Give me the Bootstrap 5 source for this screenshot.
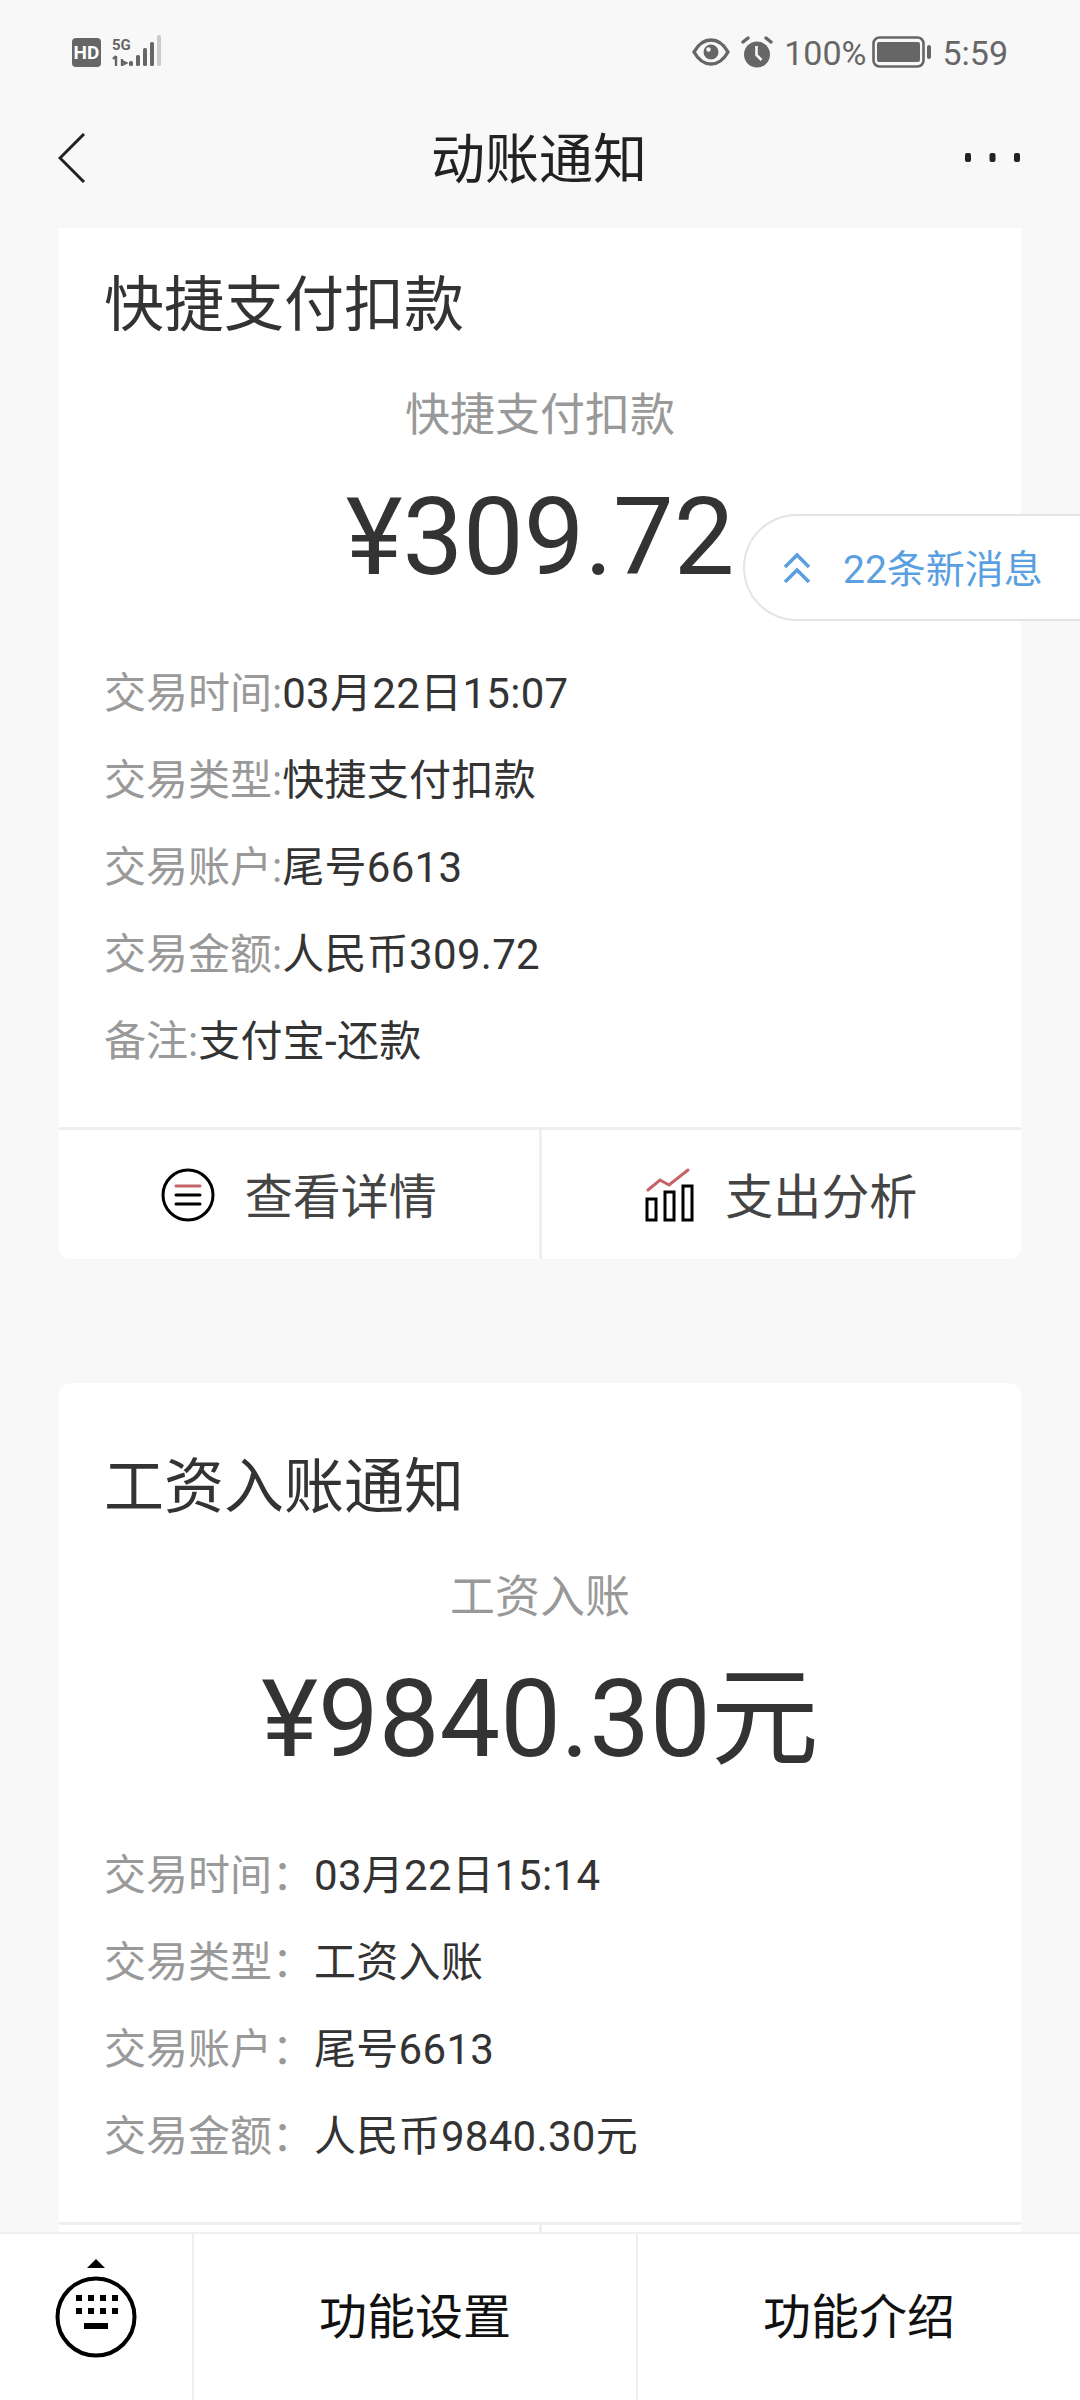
<!DOCTYPE html>
<html lang="zh-CN">
<head>
    <meta charset="UTF-8">
    <meta name="viewport" content="width=device-width, initial-scale=1.0">
    <title>动账通知</title>
    <link href="https://cdn.jsdelivr.net/npm/bootstrap@5.3.0/dist/css/bootstrap.min.css" rel="stylesheet">
    <style>
        html, body { height: 2400px; overflow: hidden; }
        body {
            background: #f8f8f8;
            color: #333;
            font-family: Roboto, "Noto Sans CJK SC", sans-serif;
        }
        .stat-bar { height: 104px; padding: 0 72px 0 70px; color: #666; font-size: 34px; }
        .stat-right { gap: 11px; }
        .stat-right span { padding-top: 2px; }
        .stat-pct { margin-right: -5px; }
        .nav-head { height: 108px; padding: 0 60px 0 58px; margin-bottom: 16px; }
        .nav-side { width: 60px; }
        .nav-title { font-size: 54px; color: #222; line-height: 1; padding-top: 5px; }
        .msg-scroll { flex: 1 1 auto; overflow: hidden; padding: 0 59px; min-height: 0; }
        .msg-card { background: #fff; border-radius: 12px; margin-bottom: 124px; }
        .msg-card:first-child { margin-top: -27px; }
        .msg-body { padding: 65px 45px 42px 45px; }
        .msg-head { font-size: 60px; line-height: 80px; color: #333; }
        .msg-sub { font-size: 45px; line-height: 60px; margin-top: 40px; color: #999; text-align: center; }
        .msg-amount { font-size: 108px; line-height: 120px; margin-top: 31px; text-align: center; color: #333; }
        .msg-rows { margin-top: 53px; }
        .msg-row { font-size: 42px; line-height: 87px; white-space: nowrap; color: #333; letter-spacing: .3px; }
        .msg-row .lbl { color: #999; letter-spacing: 0; }
        .msg-rows-wide .lbl { display: inline-block; width: 210px; }
        .act-row { border-top: 3px solid #efefef; height: 132px; }
        .act-cell { flex: 1 1 0; font-size: 48px; color: #444; gap: 30px; }
        .act-cell span { padding-top: 6px; }
        .act-cell + .act-cell { border-left: 3px solid #efefef; }
        .new-pill {
            position: absolute; top: 514px; right: 0; left: 743px; height: 107px;
            background: #fff; border: 2px solid #e4e4e4; border-right: 0;
            border-radius: 54px 0 0 54px; color: #5a9fe0; font-size: 39px;
            padding-left: 37px; gap: 31px;
        }
        .new-pill span { padding-top: 6px; }
        .foot-bar {
            position: fixed; left: 0; right: 0; bottom: 0; height: 168px;
            background: #fff; border-top: 2px solid #eee;
            font-size: 48px; color: #111;
        }
        .foot-key { width: 192px; padding-bottom: 17px; }
        .foot-cell { border-left: 2px solid #eee; padding-top: 2px; }
        .foot-wide { width: 444px; }
    </style>
</head>
<body class="d-flex flex-column">
    <div class="stat-bar d-flex align-items-center justify-content-between flex-shrink-0">
        <svg width="92" height="34" viewBox="0 0 92 34">
            <rect x="2" y="3" width="29" height="29" rx="4" fill="#666"/>
            <text x="16.5" y="24" font-size="19" font-weight="700" fill="#fff" text-anchor="middle" font-family="Roboto">HD</text>
            <text x="42" y="15" font-size="15" font-weight="700" fill="#666" font-family="Roboto">5G</text>
            <path d="M46 21v10M43 24l3-3M52 24v7M52 26l4 2-4 2" stroke="#666" stroke-width="2.4" fill="none"/>
            <rect x="59" y="26" width="4" height="5" rx="1.5" fill="#666"/>
            <rect x="66" y="20" width="4" height="11" rx="1.5" fill="#666"/>
            <rect x="73" y="13" width="4" height="18" rx="1.5" fill="#666"/>
            <rect x="80" y="7" width="4" height="24" rx="1.5" fill="#666"/>
            <rect x="87" y="0" width="4" height="31" rx="1.5" fill="#ccc"/>
        </svg>
        <div class="stat-right d-flex align-items-center">
            <svg width="38" height="30" viewBox="0 0 38 30">
                <path d="M2 15C7 6 13 3 19 3s12 3 17 12c-5 9-11 12-17 12S7 24 2 15z" fill="none" stroke="#666" stroke-width="3.4"/>
                <circle cx="19" cy="15" r="7.5" fill="#666"/>
                <circle cx="16.5" cy="12.5" r="2.2" fill="#f8f8f8"/>
            </svg>
            <svg width="32" height="32" viewBox="0 0 32 32">
                <circle cx="16" cy="18.5" r="13" fill="#666"/>
                <path d="M15.5 10v9l5 5" stroke="#f8f8f8" stroke-width="2.6" fill="none"/>
                <path d="M2 6l5-4M30 6l-5-4" stroke="#666" stroke-width="3.4" stroke-linecap="round"/>
            </svg>
            <span class="stat-pct">100%</span>
            <svg width="59" height="32" viewBox="0 0 59 32">
                <rect x="1.5" y="1.5" width="50" height="29" rx="6" fill="none" stroke="#666" stroke-width="2.6"/>
                <rect x="5" y="6" width="43" height="20" rx="2" fill="#666"/>
                <rect x="55" y="9" width="4" height="14" rx="2" fill="#666"/>
            </svg>
            <span>5:59</span>
        </div>
    </div>

    <div class="nav-head d-flex align-items-center justify-content-between flex-shrink-0">
        <div class="nav-side d-flex">
            <svg width="28" height="50" viewBox="0 0 28 50">
                <path d="M26 1L2 25l24 24" fill="none" stroke="#222" stroke-width="3"/>
            </svg>
        </div>
        <div class="nav-title">动账通知</div>
        <div class="nav-side d-flex justify-content-end">
            <svg width="55" height="10" viewBox="0 0 55 10">
                <rect x="0" y="0" width="6" height="9" rx="2" fill="#222"/>
                <rect x="24.5" y="0" width="6" height="9" rx="2" fill="#222"/>
                <rect x="49" y="0" width="6" height="9" rx="2" fill="#222"/>
            </svg>
        </div>
    </div>

    <div class="msg-scroll">
        <div class="msg-card">
            <div class="msg-body">
                <div class="msg-head">快捷支付扣款</div>
                <div class="msg-sub">快捷支付扣款</div>
                <div class="msg-amount">¥309.72</div>
                <div class="msg-rows">
                    <div class="msg-row"><span class="lbl">交易时间:</span>03月22日15:07</div>
                    <div class="msg-row"><span class="lbl">交易类型:</span>快捷支付扣款</div>
                    <div class="msg-row"><span class="lbl">交易账户:</span>尾号6613</div>
                    <div class="msg-row"><span class="lbl">交易金额:</span>人民币309.72</div>
                    <div class="msg-row"><span class="lbl">备注:</span>支付宝-还款</div>
                </div>
            </div>
            <div class="act-row d-flex">
                <div class="act-cell d-flex align-items-center justify-content-center">
                    <svg width="54" height="54" viewBox="0 0 54 54">
                        <circle cx="27" cy="27" r="25" fill="none" stroke="#000" stroke-width="3"/>
                        <path d="M15 18h24" stroke="#c4636a" stroke-width="3" stroke-linecap="round"/>
                        <path d="M15 27h24M15 36h24" stroke="#000" stroke-width="3" stroke-linecap="round"/>
                    </svg>
                    <span>查看详情</span>
                </div>
                <div class="act-cell d-flex align-items-center justify-content-center">
                    <svg width="50" height="54" viewBox="0 0 50 54">
                        <path d="M3 22l12-10 9 5L43 2" fill="none" stroke="#c4636a" stroke-width="3" stroke-linecap="round"/>
                        <rect x="2" y="31" width="9" height="21" fill="none" stroke="#000" stroke-width="3"/>
                        <rect x="20" y="24" width="9" height="28" fill="none" stroke="#000" stroke-width="3"/>
                        <rect x="38" y="18" width="9" height="34" fill="none" stroke="#000" stroke-width="3"/>
                    </svg>
                    <span>支出分析</span>
                </div>
            </div>
        </div>

        <div class="msg-card">
            <div class="msg-body">
                <div class="msg-head">工资入账通知</div>
                <div class="msg-sub">工资入账</div>
                <div class="msg-amount">¥9840.30元</div>
                <div class="msg-rows msg-rows-wide">
                    <div class="msg-row"><span class="lbl">交易时间：</span>03月22日15:14</div>
                    <div class="msg-row"><span class="lbl">交易类型：</span>工资入账</div>
                    <div class="msg-row"><span class="lbl">交易账户：</span>尾号6613</div>
                    <div class="msg-row"><span class="lbl">交易金额：</span>人民币9840.30元</div>
                </div>
            </div>
            <div class="act-row d-flex">
                <div class="act-cell"></div>
                <div class="act-cell"></div>
            </div>
        </div>
    </div>

    <div class="new-pill d-flex align-items-center">
        <svg width="30" height="32" viewBox="0 0 30 32">
            <path d="M3 15L15 3l12 12M3 30l12-12 12 12" fill="none" stroke="#5a9fe0" stroke-width="3.6"/>
        </svg>
        <span>22条新消息</span>
    </div>

    <div class="foot-bar d-flex">
        <div class="foot-key d-flex align-items-center justify-content-center">
            <svg width="84" height="102" viewBox="0 0 84 102">
                <path d="M33 10l9-9 9 9z" fill="#000"/>
                <circle cx="42" cy="59" r="38.5" fill="none" stroke="#000" stroke-width="4"/>
                <g fill="#000">
                    <rect x="22" y="37" width="6" height="6"/><rect x="34" y="37" width="6" height="6"/>
                    <rect x="46" y="37" width="6" height="6"/><rect x="58" y="37" width="6" height="6"/>
                    <rect x="22" y="50" width="6" height="6"/><rect x="34" y="50" width="6" height="6"/>
                    <rect x="46" y="50" width="6" height="6"/><rect x="58" y="50" width="6" height="6"/>
                    <rect x="30" y="65" width="24" height="6"/>
                </g>
            </svg>
        </div>
        <div class="foot-cell foot-wide d-flex align-items-center justify-content-center">功能设置</div>
        <div class="foot-cell flex-grow-1 d-flex align-items-center justify-content-center">功能介绍</div>
    </div>

    <script src="https://cdn.jsdelivr.net/npm/bootstrap@5.3.0/dist/js/bootstrap.bundle.min.js"></script>
</body>
</html>
